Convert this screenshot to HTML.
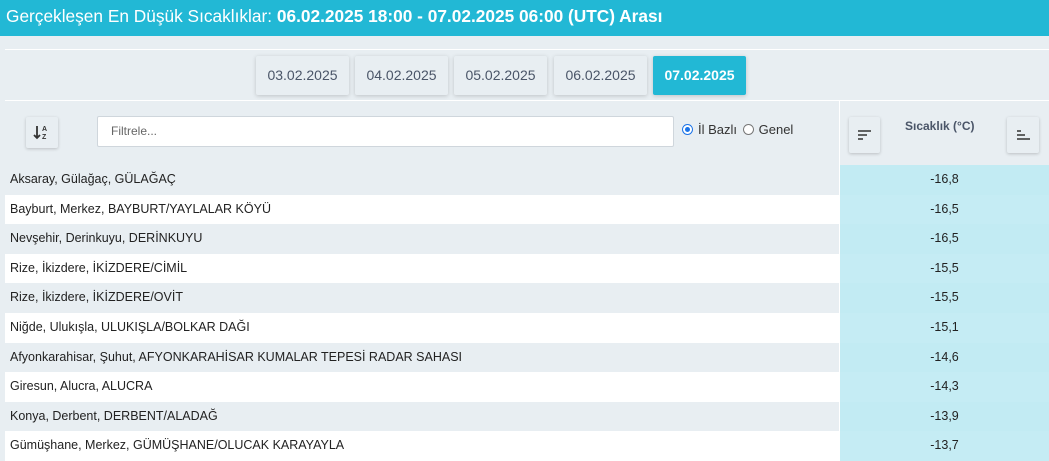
<!DOCTYPE html>
<html><head><meta charset="utf-8"><style>
*{box-sizing:border-box;margin:0;padding:0}
body{width:1049px;height:457px;overflow:hidden;background:#e8eef2;font-family:"Liberation Sans","DejaVu Sans",sans-serif;color:#222}
.hdr{position:absolute;left:0;top:0;width:1049px;height:36px;background:#22b8d5;color:#fff;font-size:17.3px;line-height:32px;padding-left:6px}
.hdr b{font-weight:bold}
.panel{position:absolute;left:5px;top:49px;width:1044px;height:408px;background:#e8eef2;border-top:1px solid #fff}
.dates{position:absolute;left:0;top:0;width:1044px;height:51px;border-bottom:1px solid #fff}
.db{position:absolute;top:6px;height:39px;width:93px;background:#e8eef2;box-shadow:0 1px 4px rgba(0,0,0,.18);border-radius:2px;font-size:14px;color:#4a5568;text-align:center;line-height:39px}
.db.act{background:#22b8d5;color:#fff;font-weight:bold}
.frow{position:absolute;left:0;top:51px;width:1044px;height:64px}
.sortbtn{position:absolute;width:32px;height:31px;background:#e8eef2;box-shadow:0 1px 3px rgba(0,0,0,.2);border-radius:2px}
.inp{position:absolute;left:92px;top:15px;width:577px;height:31px;background:#fff;border:1px solid #cfd6dc;border-radius:2px;font-size:12px;color:#666;padding-left:13px;line-height:29px}
.radio{position:absolute;top:21px;font-size:13px;color:#333;display:flex;align-items:center}
.rc{width:11px;height:11px;border-radius:50%;border:1px solid #777;background:#fff;margin-right:5px;display:inline-block;position:relative}
.rc.on{border-color:#1a73e8}
.rc.on:after{content:"";position:absolute;left:2px;top:2px;width:5px;height:5px;border-radius:50%;background:#1a73e8}
.vsep{position:absolute;left:834px;top:51px;width:1px;height:64px;background:#fff}
.th{position:absolute;left:900px;top:18px;font-size:12px;font-weight:bold;color:#4a5568}
.rows{position:absolute;left:0;top:115px;width:1044px}
.r{height:29.6px;display:flex;font-size:12.5px;line-height:29.6px}
.r .a{width:834px;padding-left:5px}
.r .b{width:210px;background:#c2ebf3;text-align:center;border-left:1px solid #fff}
.r:nth-child(odd) .a{background:#e8eef2}
.r:nth-child(even) .a{background:#fff}
.r:nth-child(even) .b{background:#c5ecf4}
</style></head><body>
<div class="hdr">Gerçekleşen En Düşük Sıcaklıklar: <b>06.02.2025 18:00 - 07.02.2025 06:00 (UTC) Arası</b></div>
<div class="panel">
<div class="dates">
<div class="db" style="left:251px">03.02.2025</div>
<div class="db" style="left:350px">04.02.2025</div>
<div class="db" style="left:449px">05.02.2025</div>
<div class="db" style="left:549px">06.02.2025</div>
<div class="db act" style="left:648px">07.02.2025</div>
</div>
<div class="frow">
<div class="sortbtn" style="left:21px;top:16px"><svg width="32" height="31"><path d="M11 9v12M8 18l3 3 3-3" stroke="#333" stroke-width="1.8" fill="none"/><text x="16" y="14" font-size="7" font-family="Liberation Sans" font-weight="bold" fill="#333">A</text><text x="16" y="22" font-size="7" font-family="Liberation Sans" font-weight="bold" fill="#333">Z</text></svg></div>
<div class="inp">Filtrele...</div>
<div class="radio" style="left:677px"><span class="rc on"></span>İl Bazlı&nbsp;<span class="rc" style="margin-left:2px"></span>Genel</div>
<div class="sortbtn" style="left:844px;top:16px;height:36px;width:31px"><svg width="31" height="36"><path d="M9 14h13M9 18h9M9 22h5" stroke="#333" stroke-width="1.6"/></svg></div>
<div class="th">Sıcaklık (°C)</div>
<div class="sortbtn" style="left:1002px;top:16px;height:36px;width:32px"><svg width="32" height="36"><path d="M10 14h4M10 18h8M10 22h13" stroke="#333" stroke-width="1.6"/></svg></div>
</div>
<div class="vsep"></div>
<div class="rows">
<div class="r"><div class="a">Aksaray, Gülağaç, GÜLAĞAÇ</div><div class="b">-16,8</div></div>
<div class="r"><div class="a">Bayburt, Merkez, BAYBURT/YAYLALAR KÖYÜ</div><div class="b">-16,5</div></div>
<div class="r"><div class="a">Nevşehir, Derinkuyu, DERİNKUYU</div><div class="b">-16,5</div></div>
<div class="r"><div class="a">Rize, İkizdere, İKİZDERE/CİMİL</div><div class="b">-15,5</div></div>
<div class="r"><div class="a">Rize, İkizdere, İKİZDERE/OVİT</div><div class="b">-15,5</div></div>
<div class="r"><div class="a">Niğde, Ulukışla, ULUKIŞLA/BOLKAR DAĞI</div><div class="b">-15,1</div></div>
<div class="r"><div class="a">Afyonkarahisar, Şuhut, AFYONKARAHİSAR KUMALAR TEPESİ RADAR SAHASI</div><div class="b">-14,6</div></div>
<div class="r"><div class="a">Giresun, Alucra, ALUCRA</div><div class="b">-14,3</div></div>
<div class="r"><div class="a">Konya, Derbent, DERBENT/ALADAĞ</div><div class="b">-13,9</div></div>
<div class="r"><div class="a">Gümüşhane, Merkez, GÜMÜŞHANE/OLUCAK KARAYAYLA</div><div class="b">-13,7</div></div>
</div>
</div>
</body></html>
